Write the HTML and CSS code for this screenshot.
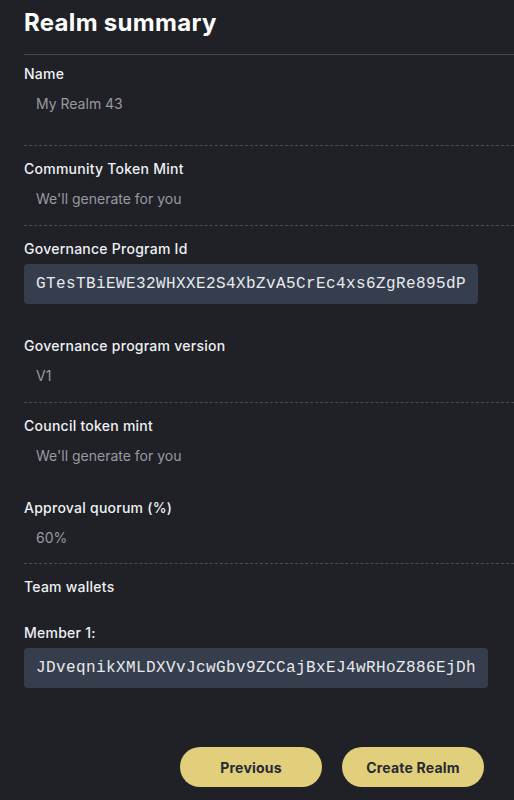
FILE: index.html
```html
<!DOCTYPE html>
<html lang="en">
<head>
<meta charset="utf-8">
<title>Realm summary</title>
<link rel="stylesheet" href="styles.css">
</head>
<body>
<main class="page">
  <h1 class="title">Realm summary</h1>
  <hr class="rule-solid">

  <section class="field field-name">
    <div class="label">Name</div>
    <div class="value">My Realm 43</div>
  </section>
  <hr class="rule-dashed">

  <section class="field">
    <div class="label">Community Token Mint</div>
    <div class="value">We'll generate for you</div>
  </section>
  <hr class="rule-dashed">

  <section class="field">
    <div class="label">Governance Program Id</div>
    <div class="mono-box">GTesTBiEWE32WHXXE2S4XbZvA5CrEc4xs6ZgRe895dP</div>
  </section>

  <section class="field field-gap">
    <div class="label">Governance program version</div>
    <div class="value">V1</div>
  </section>
  <hr class="rule-dashed">

  <section class="field">
    <div class="label">Council token mint</div>
    <div class="value">We'll generate for you</div>
  </section>

  <section class="field field-gap field-last">
    <div class="label">Approval quorum (%)</div>
    <div class="value">60%</div>
  </section>
  <hr class="rule-dashed">

  <section class="field">
    <div class="label">Team wallets</div>
    <div class="label member">Member 1:</div>
    <div class="mono-box">JDveqnikXMLDXVvJcwGbv9ZCCajBxEJ4wRHoZ886EjDh</div>
  </section>

  <div class="actions">
    <button class="btn">Previous</button>
    <button class="btn">Create Realm</button>
  </div>
</main>
</body>
</html>
```

FILE: styles.css
```css
* { box-sizing: border-box; }

html, body {
  margin: 0;
  padding: 0;
  background: #1f2127;
}

body {
  font-family: Inter, "Noto Sans", "Liberation Sans", sans-serif;
  color: #eef0f3;
  font-size: 14px;
  line-height: 20px;
  overflow: hidden;
}

.page {
  padding: 7px 0 0 24px;
}

.title {
  margin: 0;
  font-size: 24px;
  line-height: 32px;
  font-weight: 700;
  color: #ffffff;
  letter-spacing: 0.3px;
}

.rule-solid {
  margin: 15px 0 0 0;
  border: 0;
  border-top: 1px solid #44464c;
  height: 0;
}

.rule-dashed {
  margin: 0;
  border: 0;
  border-top: 1px dashed #4a4d54;
  height: 0;
}

.field {
  padding: 13px 0 15.5px 0;
}

.field-name {
  padding-top: 9px;
  padding-bottom: 31px;
}

.field-gap {
  padding-top: 17px;
  padding-bottom: 15.5px;
}

.field-last {
  padding-bottom: 14.5px;
}

.label {
  font-weight: 500;
  color: #eef0f3;
  letter-spacing: 0.25px;
}

.value {
  margin-top: 10px;
  padding-left: 12px;
  color: #979aa0;
}

.member {
  margin-top: 26px;
}

.mono-box {
  display: block;
  width: fit-content;
  margin-top: 5px;
  padding: 8px 12px;
  background: #363e4d;
  border-radius: 4px;
  font-family: "Liberation Mono", "Courier New", monospace;
  font-size: 16px;
  line-height: 24px;
  letter-spacing: 0.4px;
  color: #e8eaee;
}

.actions {
  display: flex;
  justify-content: flex-end;
  gap: 20px;
  padding: 44px 30px 0 0;
}

.btn {
  min-width: 142px;
  height: 40px;
  padding: 0 24px;
  border: 0;
  border-radius: 20px;
  background: #e1cf7b;
  color: #262a33;
  font-family: Inter, "Noto Sans", "Liberation Sans", sans-serif;
  font-size: 14px;
  font-weight: 700;
  letter-spacing: 0.2px;
}
```
